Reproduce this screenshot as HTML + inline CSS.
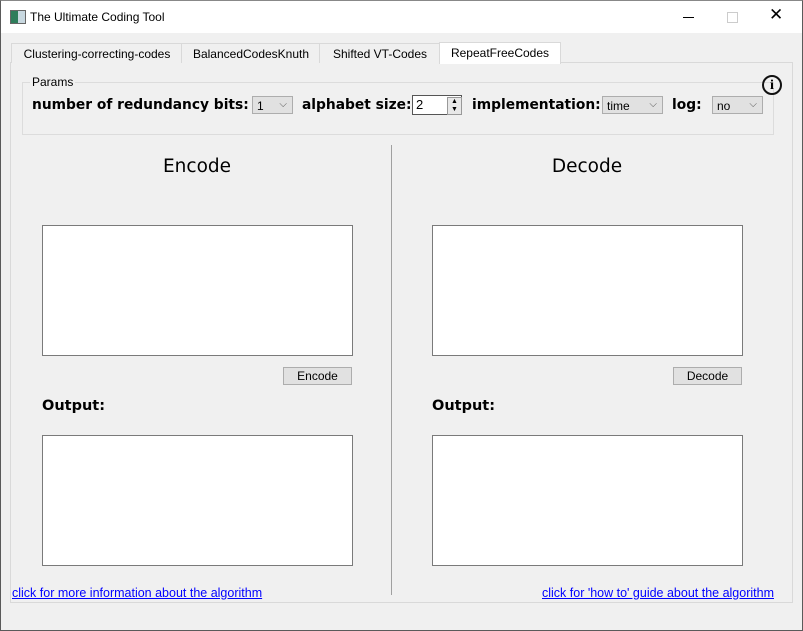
<!DOCTYPE html><html><head><style>
body{margin:0;width:803px;height:631px;background:#f0f0f0;font-family:"Liberation Sans",sans-serif;position:relative;overflow:hidden}
.a{position:absolute;white-space:nowrap}
.win{left:0;top:0;width:801px;height:629px;border:1px solid #5a5a5a;border-top:1px solid #888}
.tb{left:1px;top:1px;width:801px;height:32px;background:#fff}
.tab{top:43px;height:19px;border:1px solid #d9d9d9;border-bottom:none;background:#f0f0f0;font-size:12px;line-height:20px;text-align:center;color:#000}
.pane{left:10px;top:62px;width:781px;height:539px;border:1px solid #d9d9d9;background:#f0f0f0}
.b{font-family:"DejaVu Sans",sans-serif;font-weight:bold;font-size:13.8px;color:#000}
.cb{height:18px;border:1px solid #adadad;background:#e1e1e1;font-size:12px;line-height:18px;padding-left:4px;box-sizing:border-box}
.cb span{position:absolute;right:5px;top:-1px;font-size:10px;color:#555}
.ta{background:#fff;border:1px solid #7a7a7a}
.btn{background:#e1e1e1;border:1px solid #adadad;font-size:12px;text-align:center;line-height:16px}
.lnk{color:#0000ff;text-decoration:underline;font-size:12.5px}
</style></head><body>
<div class="a win"></div>
<div class="a tb"></div>
<div class="a" style="left:10px;top:10px;width:14px;height:12px;background:linear-gradient(90deg,#2e7d5b 50%,#c8d8e0 50%);border:1px solid #666"></div>
<div class="a" style="left:30px;top:10px;font-size:12px">The Ultimate Coding Tool</div>
<div class="a" style="left:683px;top:17px;width:11px;height:1px;background:#000"></div>
<div class="a" style="left:727px;top:12px;width:9px;height:9px;border:1px solid #ccc"></div>
<div class="a" style="left:769px;top:5px;font-size:17px;font-weight:300">✕</div>
<div class="a pane"></div>
<div class="a tab" style="left:11px;width:170px">Clustering-correcting-codes</div>
<div class="a tab" style="left:181px;width:138px">BalancedCodesKnuth</div>
<div class="a tab" style="left:319px;width:120px">Shifted VT-Codes</div>
<div class="a tab" style="left:439px;top:42px;height:21px;width:120px;background:#fff;border-color:#d9d9d9">RepeatFreeCodes</div>
<div class="a" style="left:22px;top:82px;width:750px;height:51px;border:1px solid #dcdcdc"></div>
<div class="a" style="left:30px;top:75px;background:#f0f0f0;font-size:12px;padding:0 2px">Params</div>
<div class="a b" style="left:32px;top:97px">number of redundancy bits:</div>
<div class="a cb" style="left:252px;top:96px;width:41px">1<span>⌵</span></div>
<div class="a b" style="left:302px;top:97px">alphabet size:</div>
<div class="a" style="left:412px;top:95px;width:50px;height:20px;background:#fff;border:1px solid #555;box-sizing:border-box;font-size:13px;line-height:18px;padding-left:3px">2</div>
<div class="a" style="left:447px;top:97px;width:13px;height:16px;border:1px solid #999;background:#e8e8e8;font-size:7px;line-height:8px;text-align:center">▲<br>▼</div>
<div class="a b" style="left:472px;top:97px">implementation:</div>
<div class="a cb" style="left:602px;top:96px;width:61px">time<span>⌵</span></div>
<div class="a b" style="left:672px;top:97px">log:</div>
<div class="a cb" style="left:712px;top:96px;width:51px">no<span>⌵</span></div>
<div class="a" style="left:762px;top:75px;width:16px;height:16px;border:2px solid #111;border-radius:50%;font:bold 14px 'Liberation Serif',serif;text-align:center;line-height:17px">i</div>
<div class="a" style="left:391px;top:145px;width:1px;height:450px;background:#a0a0a0"></div>
<div class="a" style="left:42px;width:310px;top:156px;text-align:center;font-size:18.5px;font-family:'DejaVu Sans',sans-serif">Encode</div>
<div class="a" style="left:432px;width:310px;top:156px;text-align:center;font-size:18.5px;font-family:'DejaVu Sans',sans-serif">Decode</div>
<div class="a ta" style="left:42px;top:225px;width:309px;height:129px"></div>
<div class="a ta" style="left:432px;top:225px;width:309px;height:129px"></div>
<div class="a btn" style="left:283px;top:367px;width:67px;height:16px">Encode</div>
<div class="a btn" style="left:673px;top:367px;width:67px;height:16px">Decode</div>
<div class="a b" style="left:42px;top:398px;font-size:14.5px">Output:</div>
<div class="a b" style="left:432px;top:398px;font-size:14.5px">Output:</div>
<div class="a ta" style="left:42px;top:435px;width:309px;height:129px"></div>
<div class="a ta" style="left:432px;top:435px;width:309px;height:129px"></div>
<div class="a lnk" style="left:12px;top:586px">click for more information about the algorithm</div>
<div class="a lnk" style="left:542px;top:586px">click for 'how to' guide about the algorithm</div>
</body></html>
